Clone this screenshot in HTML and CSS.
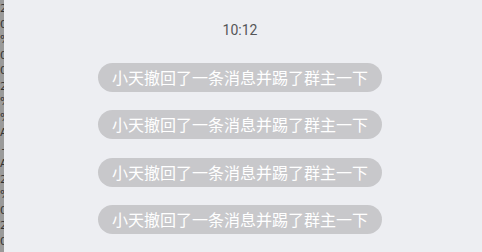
FILE: index.html
```html
<!DOCTYPE html>
<html lang="zh">

<head>
    <meta charset="UTF-8">
    <meta name="viewport" content="width=device-width, initial-scale=1.0">
    <title>聊天记录</title>
    <link rel="stylesheet" href="styles.css">
</head>

<body>
    <div class="page">
        <!-- 左边被裁掉的一列 -->
        <div class="edge">
            <span>2</span><span>0</span><span>%</span><span>0</span><span>0</span><span>2</span><span>%</span><span>%</span>
            <span>A</span><span>-</span><span>A</span><span>2</span><span>%</span><span>0</span><span>2</span><span>0</span>
        </div>

        <div class="chat">
            <div class="time">10:12</div>
            <div class="notices">
                <div class="notice">小天撤回了一条消息并踢了群主一下</div>
                <div class="notice">小天撤回了一条消息并踢了群主一下</div>
                <div class="notice">小天撤回了一条消息并踢了群主一下</div>
                <div class="notice">小天撤回了一条消息并踢了群主一下</div>
            </div>
        </div>
    </div>
</body>

</html>
```

FILE: styles.css
```css
html, body {
    margin: 0;
    height: 100%;
}
body {
    background: linear-gradient(to right, #9a9a9a 0, #9a9a9a 4px, #edeef2 4px);
    font-family: "Noto Sans CJK SC", "Noto Sans", sans-serif;
}
.page {
    display: flex;
    height: 100%;
}
.edge {
    flex: 0 0 4px;
    width: 4px;
    background-color: #9a9a9a;
    overflow: hidden;
    display: flex;
    flex-direction: column;
    align-items: flex-end;
    padding-top: 1px;
}
.edge span {
    display: block;
    flex: none;
    width: 7px;
    height: 15.5px;
    margin-right: -3px;
    font-family: "DejaVu Sans", sans-serif;
    font-size: 11px;
    line-height: 15.5px;
    color: #333;
    text-align: center;
}
.chat {
    flex: 1;
    display: flex;
    flex-direction: column;
    align-items: center;
    padding-right: 6px;
}
.time {
    margin-top: 22px;
    font-family: Roboto, "Liberation Sans", sans-serif;
    font-size: 14px;
    line-height: 16px;
    color: #555558;
}
.notices {
    display: flex;
    flex-direction: column;
    align-items: center;
    gap: 18.5px;
    margin-top: 24.5px;
}
.notice {
    height: 29px;
    line-height: 29px;
    padding: 0 14px;
    border-radius: 15px;
    background: #c8c8cb;
    color: #fff;
    font-size: 16px;
    white-space: nowrap;
}
```
